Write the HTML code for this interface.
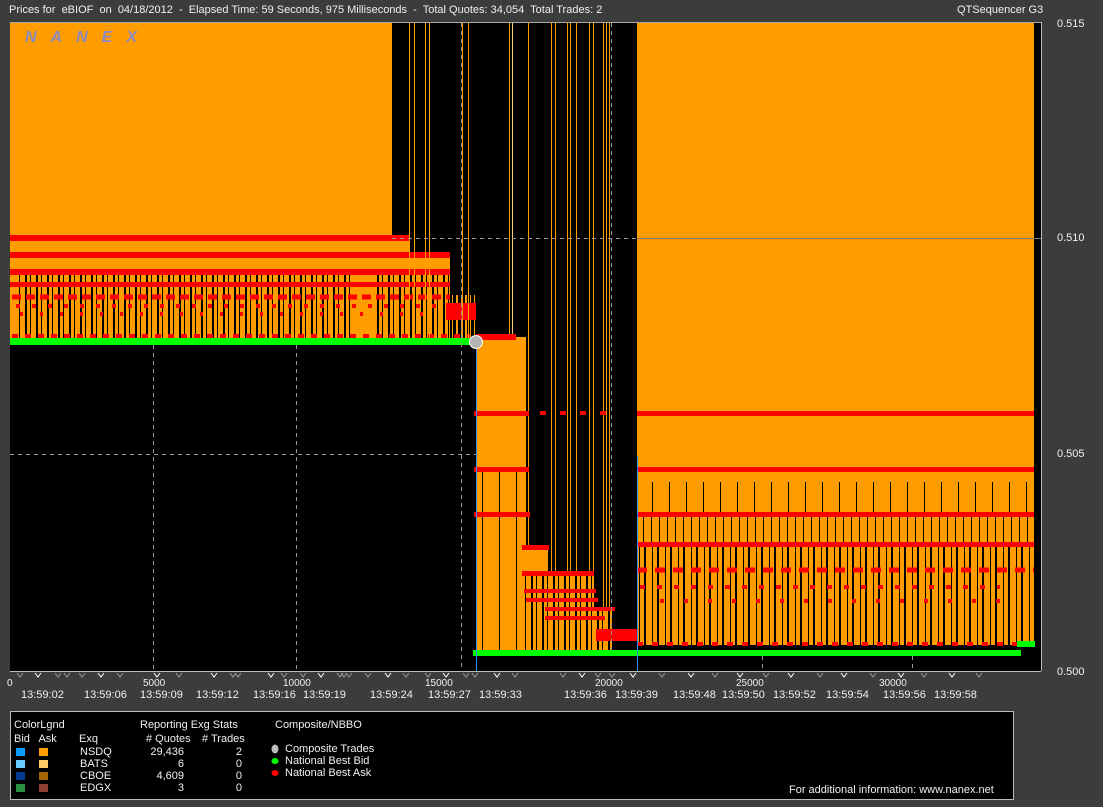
<!DOCTYPE html>
<html><head><meta charset="utf-8"><style>
html,body{margin:0;padding:0;width:1103px;height:807px;overflow:hidden;background:#3c3c3c;font-family:"Liberation Sans",sans-serif;}
.t{position:absolute;color:#f0f0f0;font-size:11px;white-space:nowrap;line-height:12px;}
</style></head><body>
<div class="t" style="left:9px;top:4px;">Prices for&nbsp; eBIOF&nbsp; on&nbsp; 04/18/2012&nbsp; -&nbsp; Elapsed Time: 59 Seconds, 975 Milliseconds&nbsp; -&nbsp; Total Quotes: 34,054&nbsp; Total Trades: 2</div>
<div class="t" style="left:957px;top:4px;">QTSequencer G3</div>

<svg style="position:absolute;left:0;top:0" width="1103" height="807">
<defs>
<pattern id="ob" width="11" height="10" patternUnits="userSpaceOnUse"><rect width="11" height="10" fill="#ff9c00"/><rect x="3" width="2" height="10" fill="#000"/><rect x="8" width="1" height="10" fill="#000"/></pattern>
<pattern id="ob2" width="17" height="10" patternUnits="userSpaceOnUse"><rect width="17" height="10" fill="#ff9c00"/><rect x="6" width="1" height="10" fill="#000"/></pattern>
<pattern id="ob3" width="8" height="10" patternUnits="userSpaceOnUse"><rect width="8" height="10" fill="#ff9c00"/><rect x="3" width="1" height="10" fill="#000"/></pattern>
<pattern id="ob4" width="13" height="10" patternUnits="userSpaceOnUse"><rect width="13" height="10" fill="#ff9c00"/><rect x="2" width="1" height="10" fill="#000"/><rect x="7" width="2" height="10" fill="#000"/></pattern>
<pattern id="bo" width="9" height="10" patternUnits="userSpaceOnUse"><rect width="9" height="10" fill="#000"/><rect x="2" width="1" height="10" fill="#ff9c00"/><rect x="6" width="2" height="10" fill="#ff9c00"/></pattern>
</defs>
<rect x="10" y="22" width="1031" height="649" fill="#000"/>
<line x1="10" y1="22.5" x2="1041" y2="22.5" stroke="#aaa"/>
<rect x="10" y="23" width="382" height="213" fill="#ff9c00"/>
<rect x="10" y="236" width="400" height="16" fill="#ff9c00"/>
<rect x="10" y="252" width="440" height="22" fill="#ff9c00"/>
<rect x="10" y="274" width="440" height="64" fill="url(#ob)"/>
<rect x="10" y="274" width="8" height="64" fill="#ff9c00"/>
<rect x="355" y="274" width="20" height="64" fill="#ff9c00"/>
<rect x="450" y="295" width="25" height="43" fill="url(#bo)"/>
<rect x="10" y="235" width="400" height="6" fill="#f00"/>
<rect x="10" y="252" width="440" height="6" fill="#f00"/>
<rect x="10" y="269" width="440" height="6" fill="#f00"/>
<rect x="10" y="282" width="440" height="5" fill="#f00"/>
<line x1="12" y1="297" x2="450" y2="297" stroke="#f00" stroke-width="5" stroke-dasharray="9 5"/>
<line x1="16" y1="306" x2="440" y2="306" stroke="#f00" stroke-width="4" stroke-dasharray="4 12"/>
<line x1="20" y1="314" x2="440" y2="314" stroke="#f00" stroke-width="4" stroke-dasharray="3 17"/>
<line x1="12" y1="336" x2="470" y2="336" stroke="#f00" stroke-width="4" stroke-dasharray="6 7"/>
<rect x="446" y="303" width="30" height="17" fill="#f00"/>
<rect x="10" y="338" width="466" height="7" fill="#00ff00"/>
<g stroke="#ff9c00" stroke-width="1">
<line x1="409.5" y1="23" x2="409.5" y2="338"/><line x1="414.5" y1="23" x2="414.5" y2="338"/>
<line x1="425.5" y1="23" x2="425.5" y2="338"/><line x1="429.5" y1="23" x2="429.5" y2="338"/>
<line x1="462.5" y1="23" x2="462.5" y2="338"/><line x1="468.5" y1="23" x2="468.5" y2="338"/>
<line x1="509.5" y1="23" x2="509.5" y2="338"/><line x1="512.5" y1="23" x2="512.5" y2="338" stroke="#ffd070"/>
<line x1="528.5" y1="23" x2="528.5" y2="650"/><line x1="551.5" y1="23" x2="551.5" y2="650"/>
<line x1="555.5" y1="23" x2="555.5" y2="650"/><line x1="567.5" y1="23" x2="567.5" y2="650"/>
<line x1="570.5" y1="23" x2="570.5" y2="650"/><line x1="576.5" y1="23" x2="576.5" y2="650"/>
<line x1="589.5" y1="23" x2="589.5" y2="650"/><line x1="593.5" y1="23" x2="593.5" y2="650"/>
<line x1="603.5" y1="23" x2="603.5" y2="650"/><line x1="606.5" y1="23" x2="606.5" y2="650"/>
<line x1="609.5" y1="23" x2="609.5" y2="650"/>
</g>
<rect x="476" y="337" width="50" height="313" fill="#ff9c00"/>
<rect x="476" y="470" width="50" height="180" fill="url(#ob2)"/>
<rect x="522" y="546" width="26" height="104" fill="#ff9c00"/>
<rect x="522" y="571" width="72" height="79" fill="url(#ob)"/>
<rect x="594" y="607" width="18" height="43" fill="url(#ob)"/>
<rect x="476" y="334" width="40" height="6" fill="#f00"/>
<rect x="474" y="411" width="55" height="5" fill="#f00"/>
<rect x="474" y="467" width="55" height="5" fill="#f00"/>
<rect x="474" y="512" width="56" height="5" fill="#f00"/>
<rect x="522" y="545" width="27" height="5" fill="#f00"/>
<rect x="522" y="571" width="72" height="5" fill="#f00"/>
<rect x="524" y="589" width="72" height="4" fill="#f00"/>
<rect x="526" y="598" width="72" height="4" fill="#f00"/>
<rect x="545" y="607" width="70" height="4" fill="#f00"/>
<rect x="545" y="616" width="60" height="4" fill="#f00"/>
<rect x="596" y="629" width="42" height="12" fill="#f00"/>
<line x1="540" y1="413" x2="610" y2="413" stroke="#f00" stroke-width="4" stroke-dasharray="6 14"/>
<rect x="637" y="23" width="397" height="492" fill="#ff9c00"/>
<rect x="637" y="482" width="397" height="33" fill="url(#ob2)"/>
<rect x="637" y="515" width="397" height="30" fill="url(#ob3)"/>
<rect x="637" y="545" width="397" height="100" fill="url(#ob4)"/>
<rect x="637" y="411" width="397" height="5" fill="#f00"/>
<rect x="637" y="467" width="397" height="5" fill="#f00"/>
<rect x="637" y="512" width="397" height="5" fill="#f00"/>
<rect x="637" y="542" width="397" height="5" fill="#f00"/>
<line x1="637" y1="570" x2="1034" y2="570" stroke="#f00" stroke-width="5" stroke-dasharray="10 8"/>
<line x1="640" y1="587" x2="1000" y2="587" stroke="#f00" stroke-width="4" stroke-dasharray="5 12"/>
<line x1="660" y1="601" x2="1000" y2="601" stroke="#f00" stroke-width="4" stroke-dasharray="4 20"/>
<line x1="637" y1="644" x2="1030" y2="644" stroke="#f00" stroke-width="4" stroke-dasharray="6 9"/>
<rect x="473" y="650" width="548" height="6" fill="#00ff00"/>
<rect x="1017" y="641" width="18" height="6" fill="#00ff00"/>
<line x1="476.5" y1="340" x2="476.5" y2="671" stroke="#2a90ff"/>
<line x1="637.5" y1="456" x2="637.5" y2="671" stroke="#2a90ff"/>
<circle cx="476" cy="342" r="6.5" fill="#b4b4b4" stroke="#fff"/>
<g stroke="#999" stroke-dasharray="4 4" stroke-width="1">
<line x1="392" y1="238.5" x2="637" y2="238.5"/>
<line x1="10" y1="454.5" x2="476" y2="454.5"/>
<line x1="153.5" y1="345" x2="153.5" y2="671"/><line x1="296.5" y1="345" x2="296.5" y2="671"/>
<line x1="461.5" y1="23" x2="461.5" y2="671"/><line x1="611.5" y1="23" x2="611.5" y2="650"/>
<line x1="762.5" y1="656" x2="762.5" y2="671"/><line x1="912.5" y1="656" x2="912.5" y2="671"/>
</g>
<line x1="637" y1="238.5" x2="1041" y2="238.5" stroke="#777"/>
<line x1="10" y1="671.5" x2="1041" y2="671.5" stroke="#bbb"/>
<line x1="1041.5" y1="22" x2="1041.5" y2="671" stroke="#bbb"/>
<g fill="none" stroke="#fff" stroke-width="1">
<path d="M35 673l3 4 3-4M98 673l3 4 3-4M154 673l3 4 3-4M211 673l3 4 3-4M268 673l3 4 3-4M318 673l3 4 3-4M385 673l3 4 3-4M443 673l3 4 3-4M494 673l3 4 3-4M579 673l3 4 3-4M630 673l3 4 3-4M688 673l3 4 3-4M737 673l3 4 3-4M788 673l3 4 3-4M841 673l3 4 3-4M898 673l3 4 3-4M949 673l3 4 3-4"/>
</g>
<g fill="none" stroke="#999" stroke-width="1">
<path d="M17 673l3 4 3-4M55 673l3 4 3-4M64 673l3 4 3-4M79 673l3 4 3-4M117 673l3 4 3-4M176 673l3 4 3-4M230 673l3 4 3-4M235 673l3 4 3-4M281 673l3 4 3-4M300 673l3 4 3-4M337 673l3 4 3-4M341 673l3 4 3-4M346 673l3 4 3-4M365 673l3 4 3-4M403 673l3 4 3-4M425 673l3 4 3-4M463 673l3 4 3-4M472 673l3 4 3-4M512 673l3 4 3-4M560 673l3 4 3-4M595 673l3 4 3-4M609 673l3 4 3-4M659 673l3 4 3-4M712 673l3 4 3-4M763 673l3 4 3-4M817 673l3 4 3-4M870 673l3 4 3-4M921 673l3 4 3-4M976 673l3 4 3-4"/>
</g>
<rect x="10.5" y="711.5" width="1003" height="88" fill="#000" stroke="#bbb"/>
<rect x="16" y="748" width="9" height="8" fill="#0a9cff"/><rect x="39" y="748" width="9" height="8" fill="#ff9c00"/>
<rect x="16" y="760" width="9" height="8" fill="#66ccff"/><rect x="39" y="760" width="9" height="8" fill="#ffcc66"/>
<rect x="16" y="772" width="9" height="8" fill="#003c96"/><rect x="39" y="772" width="9" height="8" fill="#a06400"/>
<rect x="16" y="784" width="9" height="8" fill="#2a9040"/><rect x="39" y="784" width="9" height="8" fill="#904030"/>
<ellipse cx="275" cy="749" rx="3.5" ry="4.5" fill="#bbb"/>
<ellipse cx="275" cy="761" rx="3.5" ry="3" fill="#00ff00"/>
<ellipse cx="275" cy="773" rx="3.5" ry="3" fill="#f00"/>
<text x="25" y="42" font-family="Liberation Sans,sans-serif" font-size="16" font-style="italic" font-weight="bold" fill="#8a8ac0" letter-spacing="14">NANEX</text>
</svg>

<div class="t" style="left:1057px;top:18px;">0.515</div>
<div class="t" style="left:1057px;top:232px;">0.510</div>
<div class="t" style="left:1057px;top:448px;">0.505</div>
<div class="t" style="left:1057px;top:666px;">0.500</div>

<div class="t" style="left:7px;top:678px;font-size:10px">0</div>
<div class="t" style="left:143px;top:678px;font-size:10px">5000</div>
<div class="t" style="left:283px;top:678px;font-size:10px">10000</div>
<div class="t" style="left:425px;top:678px;font-size:10px">15000</div>
<div class="t" style="left:595px;top:678px;font-size:10px">20000</div>
<div class="t" style="left:736px;top:678px;font-size:10px">25000</div>
<div class="t" style="left:879px;top:678px;font-size:10px">30000</div>

<div style="position:absolute;top:689px;left:0;font-size:10px;color:#f0f0f0;">
<span class="t" style="left:21px">13:59:02</span><span class="t" style="left:84px">13:59:06</span><span class="t" style="left:140px">13:59:09</span><span class="t" style="left:196px">13:59:12</span><span class="t" style="left:253px">13:59:16</span><span class="t" style="left:303px">13:59:19</span><span class="t" style="left:370px">13:59:24</span><span class="t" style="left:428px">13:59:27</span><span class="t" style="left:479px">13:59:33</span><span class="t" style="left:564px">13:59:36</span><span class="t" style="left:615px">13:59:39</span><span class="t" style="left:673px">13:59:48</span><span class="t" style="left:722px">13:59:50</span><span class="t" style="left:773px">13:59:52</span><span class="t" style="left:826px">13:59:54</span><span class="t" style="left:883px">13:59:56</span><span class="t" style="left:934px">13:59:58</span>
</div>

<div class="t" style="left:14px;top:719px;">ColorLgnd</div>
<div class="t" style="left:14px;top:733px;">Bid&nbsp;&nbsp; Ask</div>
<div class="t" style="left:79px;top:733px;">Exq</div>
<div class="t" style="left:140px;top:719px;">Reporting Exg Stats</div>
<div class="t" style="left:146px;top:733px;"># Quotes</div>
<div class="t" style="left:202px;top:733px;"># Trades</div>
<div class="t" style="left:275px;top:719px;">Composite/NBBO</div>
<div class="t" style="left:80px;top:746px;">NSDQ</div><div class="t" style="left:80px;top:758px;">BATS</div><div class="t" style="left:80px;top:770px;">CBOE</div><div class="t" style="left:80px;top:782px;">EDGX</div>
<div class="t" style="left:134px;width:50px;text-align:right;top:746px;">29,436</div>
<div class="t" style="left:134px;width:50px;text-align:right;top:758px;">6</div>
<div class="t" style="left:134px;width:50px;text-align:right;top:770px;">4,609</div>
<div class="t" style="left:134px;width:50px;text-align:right;top:782px;">3</div>
<div class="t" style="left:212px;width:30px;text-align:right;top:746px;">2</div>
<div class="t" style="left:212px;width:30px;text-align:right;top:758px;">0</div>
<div class="t" style="left:212px;width:30px;text-align:right;top:770px;">0</div>
<div class="t" style="left:212px;width:30px;text-align:right;top:782px;">0</div>
<div class="t" style="left:285px;top:743px;">Composite Trades</div>
<div class="t" style="left:285px;top:755px;">National Best Bid</div>
<div class="t" style="left:285px;top:767px;">National Best Ask</div>
<div class="t" style="left:789px;top:784px;">For additional information: www.nanex.net</div>
</body></html>
